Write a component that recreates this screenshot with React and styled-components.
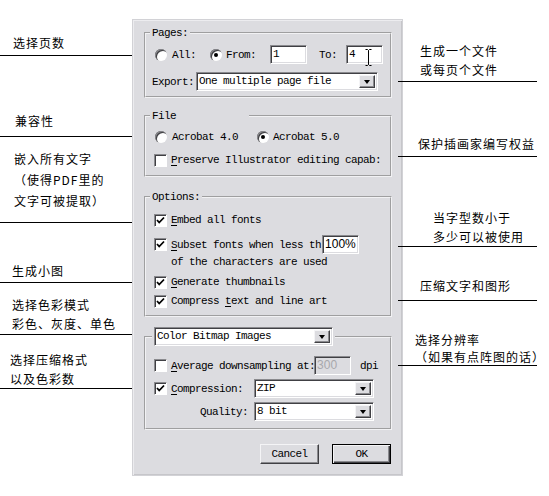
import React from "react";
import styled, { createGlobalStyle } from "styled-components";

const GlobalStyle = createGlobalStyle`
  html, body {
    margin: 0;
    padding: 0;
    background: #fff;
  }
  body {
    font-family: "Liberation Mono", "DejaVu Sans Mono", monospace;
  }
`;

const Page = styled.div`
  display: flex;
  align-items: flex-start;
  width: 549px;
  height: 496px;
  overflow: hidden;
  background: #fff;
`;

const NoteColumn = styled.div`
  display: flex;
  flex-direction: column;
  flex: none;
  width: ${p => p.width}px;
  margin-left: ${p => p.offset || 0}px;
`;

const Note = styled.div`
  margin-top: ${p => p.top}px;
  padding-left: ${p => p.indent}px;
  padding-bottom: ${p => p.pad}px;
  border-bottom: 1px solid #000;
  font-family: "Noto Sans CJK SC", "Noto Sans CJK TC", sans-serif;
  font-size: 12px;
  letter-spacing: 1px;
  line-height: ${p => p.lh || 19}px;
  color: #000;
  white-space: nowrap;
`;

const Dialog = styled.div`
  flex: none;
  display: flex;
  flex-direction: column;
  box-sizing: border-box;
  width: 271px;
  height: 457px;
  margin-top: 19px;
  padding: 7px 10px 0 11px;
  background: #dcdce0;
  border: 1px solid #d2d2d6;
  box-shadow: inset 1px 1px #ececef, inset -1px -1px #c6c6ca;
  font-size: 11px;
  letter-spacing: -0.6px;
  color: #000;
`;

const Group = styled.fieldset`
  margin: ${p => p.mt || 0}px 0 0 0;
  padding: ${p => p.pt}px 4px ${p => p.pb}px 6px;
  border: 2px groove #f2f2f4;
  min-width: 0;
`;

const Legend = styled.legend`
  margin-left: ${p => (p.ml === undefined ? -2 : p.ml)}px;
  padding: 0 ${p => p.gap || 2}px 0 2px;
  line-height: 12px;
  height: ${p => p.h || 12}px;
`;

const Row = styled.div`
  display: flex;
  align-items: center;
  height: ${p => p.h || 16}px;
  margin-top: ${p => p.mt || 0}px;
  padding-left: ${p => p.pl || 0}px;
  white-space: nowrap;
`;

const Text = styled.span`
  margin-left: ${p => p.ml || 0}px;
  margin-right: ${p => p.mr || 0}px;
  line-height: 16px;
`;

const Key = styled.span`
  text-decoration: underline;
  text-underline-offset: 2px;
`;

const RadioDot = styled.span`
  flex: none;
  position: relative;
  width: 12px;
  height: 12px;
  border-radius: 50%;
  background: #fff;
  box-shadow: inset 1px 1px 0 #8a8a8e, inset 2px 2px 0 #404044;
  margin-left: ${p => p.ml || 0}px;

  &::after {
    content: "";
    display: ${p => (p.checked ? "block" : "none")};
    position: absolute;
    left: 4px;
    top: 4px;
    width: 4px;
    height: 4px;
    border-radius: 50%;
    background: #000;
  }
`;

const Box = styled.span`
  flex: none;
  display: flex;
  align-items: center;
  justify-content: center;
  box-sizing: border-box;
  width: 13px;
  height: 13px;
  background: #fff;
  border: 1px solid;
  border-color: #8a8a8e #ffffff #ffffff #8a8a8e;
  box-shadow: inset 1px 1px 0 #404044;
`;

const CheckBox = ({ checked }) => (
  <Box>
    {checked && (
      <svg width="9" height="9" viewBox="0 0 9 9">
        <path d="M1 4 L3.2 6.5 L8 1.5" stroke="#000" strokeWidth="1.8" fill="none" />
      </svg>
    )}
  </Box>
);

const Field = styled.div`
  position: relative;
  flex: none;
  box-sizing: border-box;
  width: ${p => p.width}px;
  height: ${p => p.h || 19}px;
  margin-left: ${p => p.ml || 0}px;
  padding-left: 2px;
  background: ${p => (p.disabled ? "#dcdce0" : "#fff")};
  color: ${p => (p.disabled ? "#a8a8ac" : "#000")};
  border: 1px solid;
  border-color: #8a8a8e #ffffff #ffffff #8a8a8e;
  box-shadow: inset 1px 1px 0 #404044, inset -1px -1px 0 #dcdce0;
  line-height: 17px;
  font-family: ${p => (p.sans ? '"Liberation Sans", Arial, sans-serif' : "inherit")};
  letter-spacing: ${p => (p.sans ? "0" : "inherit")};
  font-size: ${p => (p.sans ? "12px" : "inherit")};
`;

const Cursor = styled.svg`
  position: absolute;
  left: 18px;
  top: 3px;
`;

const DropButton = styled.span`
  position: absolute;
  right: 2px;
  top: 2px;
  box-sizing: border-box;
  width: 16px;
  height: 13px;
  display: flex;
  align-items: center;
  justify-content: center;
  background: #dcdce0;
  border: 1px solid;
  border-color: #f4f4f6 #404044 #404044 #f4f4f6;
  box-shadow: inset -1px -1px 0 #8a8a8e;

  &::after {
    content: "";
    border-left: 3.5px solid transparent;
    border-right: 3.5px solid transparent;
    border-top: 4px solid #000;
  }
`;

const Select = ({ width, ml, children }) => (
  <Field width={width} ml={ml}>
    {children}
    <DropButton />
  </Field>
);

const Cell = styled.div`
  flex: none;
  display: flex;
  align-items: center;
  justify-content: ${p => (p.right ? "flex-end" : "flex-start")};
  box-sizing: border-box;
  width: ${p => p.width}px;
  padding-left: ${p => p.pl || 0}px;
  padding-right: ${p => p.pr || 0}px;
`;

const ButtonBar = styled.div`
  display: flex;
  justify-content: flex-end;
  gap: 13px;
  margin-top: 14px;
  padding-right: 1px;
`;

const Button = styled.div`
  box-sizing: border-box;
  width: 59px;
  height: 20px;
  display: flex;
  align-items: center;
  justify-content: center;
  background: #dcdce0;
  border: 1px solid;
  border-color: ${p => (p.primary ? "#000" : "#f4f4f6 #404044 #404044 #f4f4f6")};
  box-shadow: ${p =>
    p.primary
      ? "inset 1px 1px 0 #f4f4f6, inset -1px -1px 0 #404044, inset -2px -2px 0 #8a8a8e"
      : "inset -1px -1px 0 #8a8a8e"};
`;

const leftNotes = [
  { top: 33, pad: 3, indent: 13, lines: ["选择页数"] },
  { top: 55, pad: 6, indent: 15, lines: ["兼容性"] },
  { top: 11, pad: 11, indent: 14, lh: 21, lines: ["嵌入所有文字", "（使得PDF里的", "文字可被提取）"] },
  { top: 38, pad: 2, indent: 12, lines: ["生成小图"] },
  { top: 12, pad: 1, indent: 12, lines: ["选择色彩模式", "彩色、灰度、单色"] },
  { top: 15, pad: 0, indent: 10, lines: ["选择压缩格式", "以及色彩数"] },
];

const rightNotes = [
  { top: 41, pad: 2, indent: 22, lines: ["生成一个文件", "或每页个文件"] },
  { top: 52, pad: 3, indent: 20, lines: ["保护插画家编写权益"] },
  { top: 51, pad: 0, indent: 35, lines: ["当字型数小于", "多少可以被使用"] },
  { top: 29, pad: 5, indent: 22, lines: ["压缩文字和图形"] },
  { top: 30, pad: 0, indent: 17, lh: 17, lines: ["选择分辨率", "（如果有点阵图的话）"] },
];

const Notes = ({ items }) =>
  items.map((n, i) => (
    <Note key={i} top={n.top} pad={n.pad} indent={n.indent} lh={n.lh}>
      {n.lines.map(l => (
        <div key={l}>{l}</div>
      ))}
    </Note>
  ));

export default function App() {
  return (
    <Page>
      <GlobalStyle />
      <NoteColumn width={132}>
        <Notes items={leftNotes} />
      </NoteColumn>

      <Dialog>
        <Group pt={6} pb={5}>
          <Legend>Pages:</Legend>
          <Row h={19} pl={3}>
            <RadioDot />
            <Text ml={5}>All:</Text>
            <RadioDot checked ml={14} />
            <Text ml={4}>From:</Text>
            <Field width={37} ml={14}>1</Field>
            <Text ml={12}>To:</Text>
            <Field width={37} ml={9}>
              4
              <Cursor width="7" height="17" viewBox="0 0 7 17">
                <path d="M0.5 0.5 H2.5 L3.5 1.5 L4.5 0.5 H6.5 M3.5 1.5 V15.5 M0.5 16.5 H2.5 L3.5 15.5 L4.5 16.5 H6.5" stroke="#000" fill="none" />
              </Cursor>
            </Field>
          </Row>
          <Row h={19} mt={8}>
            <Text>Export:</Text>
            <Select width={182} ml={2}>One multiple page file</Select>
          </Row>
        </Group>

        <Group mt={12} pt={7} pb={7}>
          <Legend gap={73}>File</Legend>
          <Row pl={3}>
            <RadioDot />
            <Text ml={5}>Acrobat 4.0</Text>
            <RadioDot checked ml={19} />
            <Text ml={4}>Acrobat 5.0</Text>
          </Row>
          <Row mt={7} pl={2}>
            <CheckBox />
            <Text ml={4}>
              <Key>P</Key>reserve Illustrator editing capab:
            </Text>
          </Row>
        </Group>

        <Group mt={14} pt={9} pb={6}>
          <Legend>Options:</Legend>
          <Row pl={2}>
            <CheckBox checked />
            <Text ml={4}>
              <Key>E</Key>mbed all fonts
            </Text>
          </Row>
          <Row h={19} mt={7} pl={2}>
            <CheckBox checked />
            <Text ml={4}>
              <Key>S</Key>ubset fonts when less th
            </Text>
            <Field width={37} ml={1} sans>
              100%
            </Field>
          </Row>
          <Row pl={19}>
            <Text>of the characters are used</Text>
          </Row>
          <Row mt={4} pl={2}>
            <CheckBox checked />
            <Text ml={4}>
              <Key>G</Key>enerate thumbnails
            </Text>
          </Row>
          <Row mt={3} pl={2}>
            <CheckBox checked />
            <Text ml={4}>
              Compress <Key>t</Key>ext and line art
            </Text>
          </Row>
        </Group>

        <Group mt={10} pt={10} pb={7}>
          <Legend ml={0} h={19}>
            <Select width={179}>Color Bitmap Images</Select>
          </Legend>
          <Row h={19} pl={2}>
            <CheckBox />
            <Text ml={4}>
              <Key>A</Key>verage downsampling at:
            </Text>
            <Field width={37} ml={-1} disabled sans>
              300
            </Field>
            <Text ml={9}>dpi</Text>
          </Row>
          <Row h={19} mt={4}>
            <Cell width={102} pl={2}>
              <CheckBox checked />
              <Text ml={4}>
                <Key>C</Key>ompression:
              </Text>
            </Cell>
            <Select width={120}>ZIP</Select>
          </Row>
          <Row h={19} mt={4}>
            <Cell width={102} right pr={6}>
              <Text>Quality:</Text>
            </Cell>
            <Select width={120}>8 bit</Select>
          </Row>
        </Group>

        <ButtonBar>
          <Button>Cancel</Button>
          <Button primary>OK</Button>
        </ButtonBar>
      </Dialog>

      <NoteColumn width={139} offset={-5}>
        <Notes items={rightNotes} />
      </NoteColumn>
    </Page>
  );
}
